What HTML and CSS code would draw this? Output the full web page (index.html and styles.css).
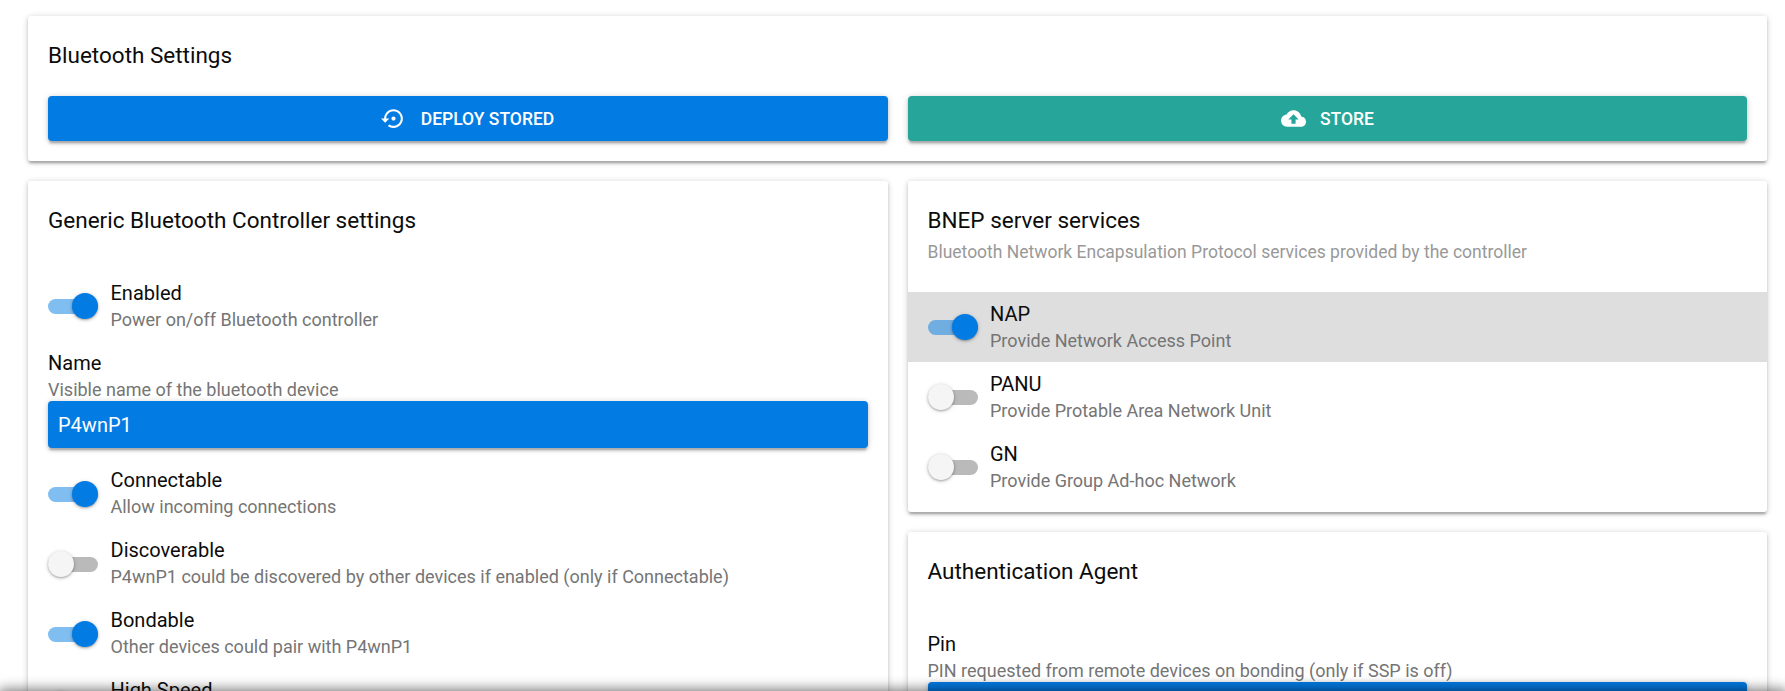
FILE: index.html
```html
<!DOCTYPE html>
<html lang="en">
<head>
<meta charset="utf-8">
<title>Bluetooth Settings</title>
<link rel="stylesheet" href="styles.css">
</head>
<body>
<main class="page">
  <section class="card card-top">
    <h2 class="title">Bluetooth Settings</h2>
    <div class="actions">
      <button class="btn btn-primary"><svg class="icon" viewBox="0 0 24 24"><path d="M14 12c0-1.1-.9-2-2-2s-2 .9-2 2 .9 2 2 2 2-.9 2-2zm-2-9c-4.97 0-9 4.03-9 9H0l4 4 4-4H5c0-3.87 3.13-7 7-7s7 3.13 7 7-3.13 7-7 7c-1.51 0-2.91-.49-4.06-1.3l-1.42 1.44C8.04 20.3 9.94 21 12 21c4.97 0 9-4.03 9-9s-4.03-9-9-9z"/></svg><span>DEPLOY STORED</span></button>
      <button class="btn btn-secondary"><svg class="icon" viewBox="0 0 24 24"><path d="M19.35 10.04C18.67 6.59 15.64 4 12 4 9.11 4 6.6 5.64 5.35 8.04 2.34 8.36 0 10.91 0 14c0 3.31 2.69 6 6 6h13c2.76 0 5-2.24 5-5 0-2.64-2.05-4.78-4.65-4.96zM14 13v4h-4v-4H7l5-5 5 5h-3z"/></svg><span>STORE</span></button>
    </div>
  </section>
  <div class="columns">
    <section class="card">
      <header class="card-head"><h2 class="title">Generic Bluetooth Controller settings</h2></header>
      <div class="list">
        <label class="item"><span class="toggle on"></span><span class="text"><span class="label">Enabled</span><span class="sub">Power on/off Bluetooth controller</span></span></label>
        <div class="item item-field">
          <span class="text"><span class="label">Name</span><span class="sub">Visible name of the bluetooth device</span></span>
          <div class="field">P4wnP1</div>
        </div>
        <label class="item"><span class="toggle on"></span><span class="text"><span class="label">Connectable</span><span class="sub">Allow incoming connections</span></span></label>
        <label class="item"><span class="toggle"></span><span class="text"><span class="label">Discoverable</span><span class="sub">P4wnP1 could be discovered by other devices if enabled (only if Connectable)</span></span></label>
        <label class="item"><span class="toggle on"></span><span class="text"><span class="label">Bondable</span><span class="sub">Other devices could pair with P4wnP1</span></span></label>
        <label class="item"><span class="toggle"></span><span class="text"><span class="label">High Speed</span></span></label>
      </div>
    </section>
    <div class="stack">
      <section class="card">
        <header class="card-head"><h2 class="title">BNEP server services</h2><p class="subtitle">Bluetooth Network Encapsulation Protocol services provided by the controller</p></header>
        <div class="list">
          <label class="item active"><span class="toggle on"></span><span class="text"><span class="label">NAP</span><span class="sub">Provide Network Access Point</span></span></label>
          <label class="item"><span class="toggle"></span><span class="text"><span class="label">PANU</span><span class="sub">Provide Protable Area Network Unit</span></span></label>
          <label class="item"><span class="toggle"></span><span class="text"><span class="label">GN</span><span class="sub">Provide Group Ad-hoc Network</span></span></label>
        </div>
      </section>
      <section class="card">
        <header class="card-head"><h2 class="title">Authentication Agent</h2></header>
        <div class="list">
          <div class="item item-field">
            <span class="text"><span class="label">Pin</span><span class="sub">PIN requested from remote devices on bonding (only if SSP is off)</span></span>
            <div class="field"></div>
          </div>
        </div>
      </section>
    </div>
  </div>
</main>
<footer class="footer"></footer>
</body>
</html>
```
FILE: styles.css
```css
* { box-sizing: border-box; }
html, body { height: 100%; overflow: hidden; }
body {
  margin: 0;
  background: #fff;
  color: #0c0c0c;
  font-family: Roboto, sans-serif;
  font-size: 20px;
}
.page { padding: 16px 18px 0 28px; }
.card {
  background: #fff;
  border-radius: 3px;
  box-shadow: 0 1px 6px rgba(0,0,0,.2), 0 2.5px 2.5px rgba(0,0,0,.14), 0 3.75px 1.25px -2.5px rgba(0,0,0,.12);
}
.card-top { height: 145px; padding: 20px; margin-bottom: 20px; }
.title { margin: 0; padding-bottom: 2px; font-size: 22.5px; font-weight: 400; line-height: 38px; }
.subtitle { margin: 0; padding-top: 1px; font-size: 17.5px; line-height: 21px; height: 21px; color: #999; }
.actions { display: grid; grid-template-columns: 840px 1fr; gap: 20px; margin-top: 20px; }
.btn {
  display: flex;
  align-items: center;
  justify-content: center;
  gap: 14px;
  height: 45px;
  padding: 0;
  border: 0;
  border-radius: 4px;
  color: #fff;
  font: 500 17.5px/21px Roboto, sans-serif;
  box-shadow: 0 1px 6px rgba(0,0,0,.2), 0 2.5px 2.5px rgba(0,0,0,.14), 0 3.75px 1.25px -2.5px rgba(0,0,0,.12);
}
.btn span { padding-top: 2px; }
.btn-primary { background: #027be3; }
.btn-primary .icon { margin: 0 1px 0 -1px; }
.btn-secondary { background: #26a69a; }
.icon { width: 25px; height: 25px; fill: currentColor; }
.columns { display: grid; grid-template-columns: 859.5px 1fr; gap: 20px; }
.stack { display: flex; flex-direction: column; gap: 20px; }
.card-head { padding: 20px; }
.list { padding: 10px 0; }
.item { display: flex; align-items: center; gap: 12.5px; height: 70px; padding: 10px 20px; }
.item.active { background: #dedede; }
.item-field { flex-direction: column; align-items: stretch; gap: 0; height: 117.4px; }
.item-field ~ .item .toggle { margin-top: 1px; }
.text { display: flex; flex-direction: column; height: 50px; }
.label { line-height: 24px; }
.sub { margin-top: 4px; font-size: 18px; line-height: 21px; color: #757575; }
.field {
  height: 47px;
  flex: none;
  padding: 0 10px;
  border-radius: 4px;
  background: #027be3;
  color: #fff;
  line-height: 48px;
  box-shadow: 0 1px 6px rgba(0,0,0,.2), 0 2.5px 2.5px rgba(0,0,0,.14), 0 3.75px 1.25px -2.5px rgba(0,0,0,.12);
}
.toggle { position: relative; flex: none; width: 50px; height: 26px; }
.toggle::before {
  content: "";
  position: absolute;
  inset: 6px 0 5px;
  border-radius: 8px;
  background: #000;
  opacity: .27;
}
.toggle::after {
  content: "";
  position: absolute;
  top: 0;
  left: 0;
  width: 26px;
  height: 26px;
  border-radius: 50%;
  background: #f5f5f5;
  box-shadow: 0 1px 4px rgba(0,0,0,.2), 0 1px 2px rgba(0,0,0,.24);
}
.toggle.on::before { background: #027be3; opacity: .5; }
.toggle.on::after { left: 24px; background: #027be3; }
.footer {
  position: fixed;
  left: 0;
  right: 0;
  bottom: -60px;
  height: 60px;
  box-shadow: 0 0 12.5px 2.5px rgba(0,0,0,.3), 0 0 12.5px rgba(0,0,0,.34);
}
```
